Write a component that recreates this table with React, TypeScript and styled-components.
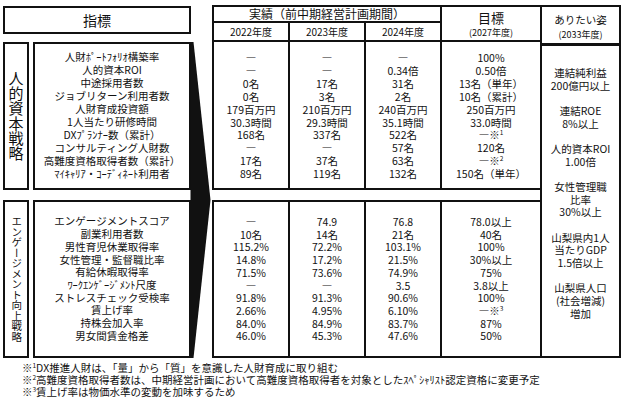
import styled, { createGlobalStyle } from 'styled-components';

const GlobalStyle = createGlobalStyle`
  html, body {
    margin: 0;
    padding: 0;
    background: #fff;
  }
  body {
    font-family: "Noto Sans CJK JP", "Noto Sans", sans-serif;
    color: #111;
  }
`;

const Sheet = styled.div`
  width: 624px;
  height: 404px;
  box-sizing: border-box;
  padding: 5px 0 0 3px;
  overflow: hidden;
`;

const Board = styled.div`
  display: grid;
  grid-template-columns: 26px 4px 158px 21px 78px 76px 76px 100px 79px;
  grid-template-rows: 18px 19px 148px 10px 158px;
`;

const Box = styled.div`
  box-sizing: border-box;
  border: 2px solid #111;
  display: flex;
  flex-direction: column;
  align-items: center;
  justify-content: center;
  text-align: center;
  white-space: nowrap;
`;

const IndicatorHead = styled(Box)`
  grid-column: 1 / 4;
  grid-row: 1 / 3;
  align-self: start;
  margin-top: 1px;
  height: 28px;
  font-size: 14px;
`;

const SideLabel = styled(Box)<{ $row: number; $size: number }>`
  grid-column: 1;
  grid-row: ${p => p.$row};
  writing-mode: vertical-rl;
  text-orientation: upright;
  font-size: ${p => p.$size}px;
  line-height: 1;
`;

const NameBox = styled(Box)<{ $row: number }>`
  grid-column: 3;
  grid-row: ${p => p.$row};
`;

const ArrowSlot = styled.svg`
  grid-column: 4;
  grid-row: 3 / 6;
  width: 21px;
  height: 316px;
  overflow: visible;
`;

const ResultTitle = styled(Box)`
  grid-column: 5 / 8;
  grid-row: 1;
  font-size: 12px;
  line-height: 1;
`;

const YearCell = styled(Box)<{ $col: number }>`
  grid-column: ${p => p.$col};
  grid-row: 2;
  margin-top: -2px;
  margin-left: ${p => (p.$col > 5 ? -2 : 0)}px;
  font-size: 10px;
  line-height: 1;
`;

const ValueCell = styled(Box)<{ $col: number; $row: number }>`
  grid-column: ${p => p.$col};
  grid-row: ${p => p.$row};
  margin-top: ${p => (p.$row === 3 ? -2 : 0)}px;
  margin-left: ${p => (p.$col > 5 ? -2 : 0)}px;
  padding-top: ${p => (p.$row === 3 ? 3 : 1)}px;
`;

const TargetHead = styled(Box)`
  grid-column: 8;
  grid-row: 1 / 3;
  margin-left: -2px;
  padding-top: 1px;
`;

const HeadMain = styled.div<{ $size: number }>`
  font-size: ${p => p.$size}px;
  line-height: 17px;
`;

const HeadSub = styled.div`
  font-size: 9px;
  line-height: 13px;
`;

const VisionColumn = styled.div`
  grid-column: 9;
  grid-row: 1 / 6;
  margin-left: -2px;
  display: flex;
  flex-direction: column;
`;

const VisionHead = styled(Box)`
  height: 40px;
  padding-top: 1px;
`;

const VisionBody = styled(Box)`
  flex: 1;
  margin-top: -1px;
  justify-content: flex-start;
  padding-top: 21px;
`;

const VisionGroup = styled.div`
  margin-bottom: 12.7px;
`;

const Line = styled.div<{ $lh: number }>`
  font-size: 10.5px;
  line-height: ${p => p.$lh}px;
`;

const Notes = styled.div`
  margin: 4px 0 0 19px;
  font-size: 10.5px;
  line-height: 12px;
  white-space: nowrap;
`;

const Sup = styled.sup`
  font-size: 6.5px;
  line-height: 0;
  vertical-align: 4px;
`;

const DASH = '―';

const upperNames = [
  '人財ﾎﾟｰﾄﾌｫﾘｵ構築率',
  '人的資本ROI',
  '中途採用者数',
  'ジョブリターン利用者数',
  '人財育成投資額',
  '1人当たり研修時間',
  'DXﾌﾟﾗﾝﾅｰ数（累計）',
  'コンサルティング人財数',
  '高難度資格取得者数（累計）',
  'ﾏｲｷｬﾘｱ・ｺｰﾃﾞｨﾈｰﾄ利用者',
];

const lowerNames = [
  'エンゲージメントスコア',
  '副業利用者数',
  '男性育児休業取得率',
  '女性管理・監督職比率',
  '有給休暇取得率',
  'ﾜｰｸｴﾝｹﾞｰｼﾞﾒﾝﾄ尺度',
  'ストレスチェック受検率',
  '賃上げ率',
  '持株会加入率',
  '男女間賃金格差',
];

const upperValues: React.ReactNode[][] = [
  [DASH, DASH, '0名', '0名', '179百万円', '30.3時間', '168名', DASH, '17名', '89名'],
  [DASH, DASH, '17名', '3名', '210百万円', '29.3時間', '337名', DASH, '37名', '119名'],
  [DASH, '0.34倍', '31名', '2名', '240百万円', '35.1時間', '522名', '57名', '63名', '132名'],
  [
    '100%', '0.50倍', '13名（単年）', '10名（累計）', '250百万円', '33.0時間',
    <>{DASH}※<Sup>1</Sup></>, '120名', <>{DASH}※<Sup>2</Sup></>, '150名（単年）',
  ],
];

const lowerValues: React.ReactNode[][] = [
  [DASH, '10名', '115.2%', '14.8%', '71.5%', DASH, '91.8%', '2.66%', '84.0%', '46.0%'],
  ['74.9', '14名', '72.2%', '17.2%', '73.6%', DASH, '91.3%', '4.95%', '84.9%', '45.3%'],
  ['76.8', '21名', '103.1%', '21.5%', '74.9%', '3.5', '90.6%', '6.10%', '83.7%', '47.6%'],
  ['78.0以上', '40名', '100%', '30%以上', '75%', '3.8以上', '100%', <>{DASH}※<Sup>3</Sup></>, '87%', '50%'],
];

const vision = [
  ['連結純利益', '200億円以上'],
  ['連結ROE', '8%以上'],
  ['人的資本ROI', '1.00倍'],
  ['女性管理職', '比率', '30%以上'],
  ['山梨県内1人', '当たりGDP', '1.5倍以上'],
  ['山梨県人口', '(社会増減)', '増加'],
];

const years = ['2022年度', '2023年度', '2024年度'];

export default function App() {
  return (
    <Sheet>
      <GlobalStyle />
      <Board>
        <IndicatorHead>指標</IndicatorHead>
        <ResultTitle>実績（前中期経営計画期間）</ResultTitle>
        {years.map((y, i) => (
          <YearCell key={y} $col={5 + i}>{y}</YearCell>
        ))}
        <TargetHead>
          <HeadMain $size={13}>目標</HeadMain>
          <HeadSub>(2027年度)</HeadSub>
        </TargetHead>

        <SideLabel $row={3} $size={15}>人的資本戦略</SideLabel>
        <NameBox $row={3}>
          {upperNames.map(n => <Line key={n} $lh={12.9}>{n}</Line>)}
        </NameBox>
        {upperValues.map((col, i) => (
          <ValueCell key={i} $col={5 + i} $row={3}>
            {col.map((v, j) => <Line key={j} $lh={12.9}>{v}</Line>)}
          </ValueCell>
        ))}

        <ArrowSlot viewBox="0 0 21 316">
          <polygon points="-0.5,0 2.5,0 19.5,158 2.5,316 -0.5,316" fill="#111" />
        </ArrowSlot>

        <SideLabel $row={5} $size={10.5}>エンゲージメント向上戦略</SideLabel>
        <NameBox $row={5}>
          {lowerNames.map(n => <Line key={n} $lh={12.7}>{n}</Line>)}
        </NameBox>
        {lowerValues.map((col, i) => (
          <ValueCell key={i} $col={5 + i} $row={5}>
            {col.map((v, j) => <Line key={j} $lh={12.7}>{v}</Line>)}
          </ValueCell>
        ))}

        <VisionColumn>
          <VisionHead>
            <HeadMain $size={10.5}>ありたい姿</HeadMain>
            <HeadSub>(2033年度)</HeadSub>
          </VisionHead>
          <VisionBody>
            {vision.map((g, i) => (
              <VisionGroup key={i}>
                {g.map(t => <Line key={t} $lh={12.65}>{t}</Line>)}
              </VisionGroup>
            ))}
          </VisionBody>
        </VisionColumn>
      </Board>
      <Notes>
        <div>※<Sup>1</Sup>DX推進人財は、「量」から「質」を意識した人財育成に取り組む</div>
        <div>※<Sup>2</Sup>高難度資格取得者数は、中期経営計画において高難度資格取得者を対象としたｽﾍﾟｼｬﾘｽﾄ認定資格に変更予定</div>
        <div>※<Sup>3</Sup>賃上げ率は物価水準の変動を加味するため</div>
      </Notes>
    </Sheet>
  );
}
